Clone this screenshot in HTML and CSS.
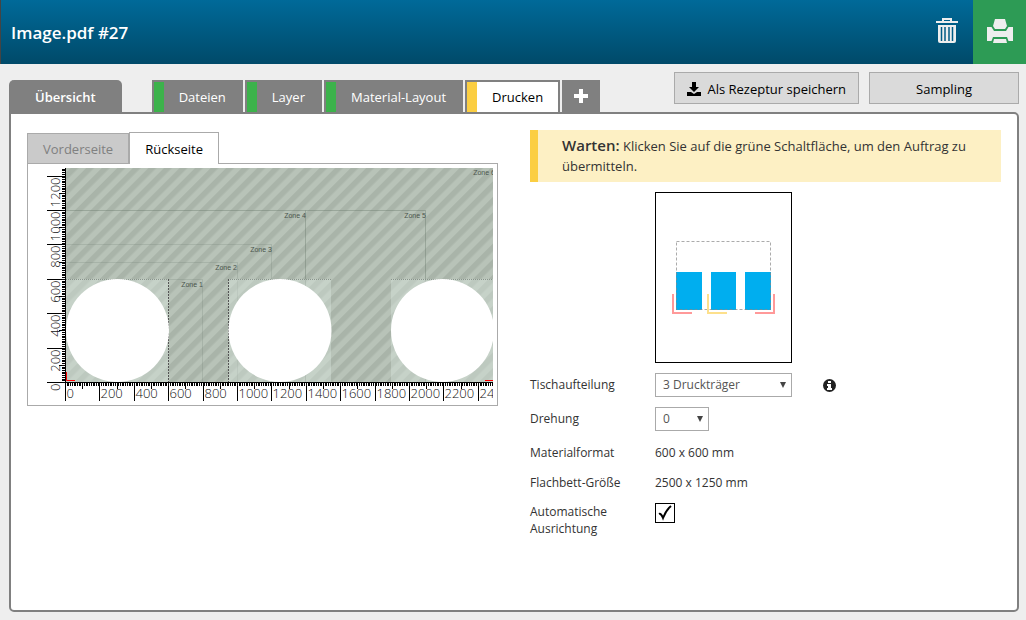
FILE: index.html
```
<!DOCTYPE html>
<html lang="de">
<head>
    <meta charset="UTF-8">
    <meta name="viewport" content="width=device-width, initial-scale=1.0">
    <title>Image.pdf #27</title>
    <link rel="stylesheet" href="styles.css">
</head>
<body>
    <header class="topbar">
        <h1>Image.pdf #27</h1>
        <button class="delete" aria-label="Löschen">
            <svg width="24" height="28" viewBox="0 0 24 28">
                <path d="M8 4V2h8v2" fill="none" stroke="#eee" stroke-width="2"/>
                <path d="M1 4h22v2H1z" fill="#eee"/>
                <path d="M3 8h18v16q0 2-2 2H5q-2 0-2-2z" fill="#eee"/>
                <path d="M6.500 10v14M10 10v14M14 10v14M17.500 10v14" stroke="#005b84" stroke-width="1.500"/>
            </svg>
        </button>
        <button class="print" aria-label="Drucken">
            <svg width="26" height="26" viewBox="0 0 26 26" fill="#eee">
                <path d="M8 0h10l2 7-2 3H8L6 7z"/>
                <path d="M0 8h4.500l2.500 4h12l2.500-4H26v14h-4.500l-1.500-4H6l-1.500 4H0z"/>
                <path d="M7 20h12l1 4H6z"/>
            </svg>
        </button>
    </header>

    <div class="bar">
        <nav class="tabs">
            <button class="tab overview">Übersicht</button>
            <button class="tab done">Dateien</button>
            <button class="tab done">Layer</button>
            <button class="tab done">Material-Layout</button>
            <button class="tab active">Drucken</button>
            <button class="tab add" aria-label="Hinzufügen">
                <svg width="14" height="14" viewBox="0 0 14 14"><path d="M7 0v14M0 7h14" stroke="#fff" stroke-width="4"/></svg>
            </button>
        </nav>
        <div class="actions">
            <button class="btn">
                <svg width="14" height="14" viewBox="0 0 14 14"><path d="M5 0h4v5h3L7 10 2 5h3zM0 10h4l3 2 3-2h4v4H0z"/></svg>
                Als Rezeptur speichern
            </button>
            <button class="btn">Sampling</button>
        </div>
    </div>

    <main class="panel">
        <section class="preview">
            <div class="sides">
                <button class="side">Vorderseite</button>
                <button class="side current">Rückseite</button>
            </div>
            <div class="plot">
                <svg width="469" height="241" viewBox="0 0 469 241">
                    <defs>
                        <pattern id="stripes" width="11" height="11" patternUnits="userSpaceOnUse" patternTransform="rotate(45)">
                            <rect width="11" height="11" fill="#b8c3b8"/>
                            <rect width="5.500" height="11" fill="#a9b4a9"/>
                        </pattern>
                        <clipPath id="area"><rect x="37" y="4" width="428" height="237"/></clipPath>
                    </defs>
                    <rect x="38" y="4" width="427" height="214" fill="url(#stripes)"/>
                    <g clip-path="url(#area)">
                        <!-- zones -->
                        <g fill="none" stroke="#5f6f62" stroke-opacity=".35">
                            <path d="M38 46.500H397.500V218M277.500 46.500V218"/>
                            <path d="M38 80.500H243.500V218M38 98.500H209.500V218M141 115.500H174.500V218" stroke-opacity=".18"/>
                        </g>
                        <g class="zone">
                            <text x="175" y="123">Zone 1</text>
                            <text x="209" y="106">Zone 2</text>
                            <text x="244" y="88">Zone 3</text>
                            <text x="278" y="54">Zone 4</text>
                            <text x="398" y="54">Zone 5</text>
                            <text x="467" y="11">Zone 6</text>
                        </g>
                        <!-- boards -->
                        <path d="M38 115h103v103H38zM200 115h103v103H200zM363 115h103v103H363z" fill="#dde8e0" fill-opacity=".4"/>
                        <path d="M38 115.500h103M200 115.500h103M363 115.500h103" stroke="#8a948c" stroke-dasharray="1 1"/>
                        <path d="M140.500 115v103M200.500 115v103" stroke="#555" stroke-dasharray="2 1"/>
                        <g fill="#fff">
                            <circle cx="89.500" cy="166.500" r="51.500"/>
                            <circle cx="252" cy="166.500" r="51.500"/>
                            <circle cx="414.500" cy="166.500" r="51.500"/>
                        </g>
                        <path d="M38.500 208v8.500H47M457 216.500h8" fill="none" stroke="red"/>
                    </g>
                    <g id="rulers" stroke="#000"></g>
                    <g id="labels" class="label" clip-path="url(#area)"></g>
                    <g id="labelsY" class="label"></g>
                </svg>
            </div>
        </section>

        <section class="settings">
            <p class="notice"><strong>Warten:</strong> Klicken Sie auf die grüne Schaltfläche, um den Auftrag zu übermitteln.</p>
            <svg class="bed" width="137" height="171" viewBox="0 0 137 171">
                <rect x=".5" y=".5" width="136" height="170" fill="#fff" stroke="#000"/>
                <path d="M21 80h26v38H21zM56 80h25v38H56zM90 80h26v38H90z" fill="#00aeef"/>
                <rect x="21.500" y="49.500" width="94" height="68" fill="none" stroke="#888" stroke-opacity=".7" stroke-dasharray="3 2"/>
                <path d="M18 102v19h19M119 102v19h-19" fill="none" stroke="#f99" stroke-width="2"/>
                <path d="M53 102v19h19" fill="none" stroke="#fde08c" stroke-width="2"/>
            </svg>
            <form class="fields">
                <label for="split">Tischaufteilung</label>
                <div class="value">
                    <span class="pick"><select id="split"><option>3 Druckträger</option></select></span>
                    <svg class="info" width="13" height="13" viewBox="0 0 13 13">
                        <circle cx="6.500" cy="6.500" r="6.500" fill="#222"/>
                        <path d="M5 2h3v2H5zM4 5h4v4h1v2H4V9h1V7H4z" fill="#fff"/>
                    </svg>
                </div>
                <label for="rotation">Drehung</label>
                <div class="value last"><span class="pick small"><select id="rotation"><option>0</option></select></span></div>
                <span>Materialformat</span>
                <span>600 x 600 mm</span>
                <span>Flachbett-Größe</span>
                <span>2500 x 1250 mm</span>
                <label for="align">Automatische Ausrichtung</label>
                <span class="check">
                    <input type="checkbox" id="align" checked>
                    <svg width="20" height="20" viewBox="0 0 20 20"><path d="M4 11q2-1 4 4Q11 7 16 3" fill="none" stroke="#000" stroke-width="2"/></svg>
                </span>
            </form>
        </section>
    </main>

    <script>
        // rulers: a tick every 10 mm, a label every 200 mm
        const scale = 34.4 / 200;
        const zeroX = 37.5;
        const zeroY = 218.5;
        let ticks = "";
        let labelsX = "";
        let labelsY = "";

        function tickLength(mm) {
            if (mm % 200 === 0) return 19;
            return mm % 100 === 0 ? 7 : 4;
        }

        for (let mm = 0; mm <= 2480; mm += 10) {
            const x = Math.floor(zeroX + mm * scale) + 0.5;
            ticks += `M${x} 218v${tickLength(mm)}`;
            if (mm % 200 === 0) {
                labelsX += `<text x="${x + 1}" y="234">${mm}</text>`;
            }
        }
        for (let mm = 0; mm <= 1240; mm += 10) {
            const y = Math.floor(zeroY - mm * scale) + 0.5;
            ticks += `M38 ${y}h-${tickLength(mm)}`;
            if (mm % 200 === 0) {
                labelsY += `<text transform="translate(32 ${y + 1}) rotate(-90)">${mm}</text>`;
            }
        }
        document.querySelector("#rulers").innerHTML = `<path d="${ticks}M37.5 4V219M37 218.5H465"/>`;
        document.querySelector("#labels").innerHTML = labelsX;
        document.querySelector("#labelsY").innerHTML = labelsY;
    </script>
</body>
</html>
```
FILE: styles.css
```
* {
    box-sizing: border-box;
}
body {
    margin: 0;
    min-height: 100vh;
    display: flex;
    flex-direction: column;
    background: #eee;
    color: #333;
    font: 13px/20px "Open Sans", "Noto Sans", sans-serif;
}
button, select {
    font: inherit;
    border: 0;
    border-radius: 0;
    padding: 0;
}

.topbar {
    display: flex;
    height: 64px;
    border-left: 1px solid #444;
    background: linear-gradient(#006a99, #004a69);
}
.topbar h1 {
    flex: 1;
    margin: 0;
    padding-left: 10px;
    font-size: 17px;
    font-weight: 600;
    line-height: 66px;
    color: #fff;
}
.topbar button {
    display: flex;
    align-items: center;
    justify-content: center;
    width: 53px;
    padding-bottom: 2px;
    background: none;
}
.topbar .print {
    padding: 0;
    background: #2d9b55;
}

.bar {
    display: flex;
    justify-content: space-between;
    align-items: flex-end;
    height: 48px;
    padding: 0 7px 0 9px;
}
.tabs {
    display: flex;
    gap: 2px;
}
.tab {
    height: 32px;
    padding: 2px 17px 0 15px;
    border-left: 2px solid #808080;
    background: #808080;
    color: #fff;
}
.tab.overview {
    margin-right: 28px;
    padding: 2px 26px 0 24px;
    border-radius: 5px 5px 0 0;
    font-weight: 600;
}
.tab.done, .tab.active {
    border-top: 2px solid #808080;
    padding-top: 0;
    line-height: 30px;
}
.tab.done::before, .tab.active::before {
    content: "";
    float: left;
    width: 10px;
    height: 30px;
    margin: 0 15px 0 -15px;
    background: #3cb24b;
}
.tab.active {
    height: 34px;
    margin-bottom: -2px;
    padding-right: 15px;
    border-right: 2px solid #808080;
    background: #fff;
    color: #000;
}
.tab.active::before {
    height: 32px;
    background: #fbce42;
}
.tab.add {padding: 0 12px 0 10px;}
.tab.add svg {display: block;}

.actions {
    display: flex;
    gap: 10px;
    padding-bottom: 8px;
}
.btn {
    display: flex;
    align-items: center;
    justify-content: center;
    gap: 6px;
    min-width: 150px;
    height: 32px;
    padding: 1px 12px 0;
    border: 1px solid #aaa;
    background: #dadada;
    color: #000;
}

.panel {
    flex: 1;
    display: flex;
    gap: 32px;
    margin: 0 7px 8px 9px;
    padding: 16px;
    border: 2px solid #808080;
    border-radius: 0 5px 5px 5px;
    background: #fff;
}
.preview {width: 471px;}
.sides {
    display: flex;
    align-items: flex-end;
    padding-top: 2px;
}
.side {
    height: 30px;
    padding: 0 15px;
    border: 1px solid #aaa;
    border-bottom: 0;
    background: #cacaca;
    color: #808080;
}
.side.current {
    height: 32px;
    margin-bottom: -1px;
    background: #fff;
    color: #000;
}
.plot {border: 1px solid #aaa;}
.plot svg {display: block;}
.label {
    font: 300 13px "Open Sans", sans-serif;
    fill: #111;
}
#labelsY {text-anchor: end;}
.zone {
    font: 7px "Liberation Sans", sans-serif;
    text-anchor: end;
    fill: #4b554d;
}

.settings {flex: 1;}
.notice {
    margin: 0 0 10px;
    padding: 6px 16px 6px 24px;
    border-left: 8px solid #fbce42;
    background: #fdf0c4;
}
.notice strong {
    font-size: 15px;
    font-weight: 600;
    line-height: 15px;
}
.bed {
    display: block;
    margin: 0 0 10px 125px;
}
.fields {
    display: grid;
    grid-template-columns: 115px 1fr;
    gap: 10px;
    align-items: start;
    font-size: 12px;
}
.fields label {line-height: 24px;}
.fields label:last-of-type {line-height: 17px;}
.value {
    display: flex;
    align-items: center;
    gap: 31px;
}
.value.last {margin-bottom: 2px;}
.pick {
    position: relative;
    width: 137px;
}
.pick.small {width: 54px;}
.pick::after {
    content: "";
    position: absolute;
    right: 6px;
    top: 9px;
    border: 3px solid transparent;
    border-top: 6px solid #444;
    border-bottom: 0;
}
.pick select {
    display: block;
    width: 100%;
    height: 24px;
    padding-left: 7px;
    border: 1px solid #aaa;
    background: #fff;
    color: #555;
    appearance: none;
}
.check {
    display: grid;
    width: 20px;
}
.check input, .check svg {
    grid-area: 1 / 1;
    width: 20px;
    height: 20px;
    margin: 0;
    pointer-events: none;
}
.check input {
    appearance: none;
    border: 1px solid #000;
    pointer-events: auto;
}
```
